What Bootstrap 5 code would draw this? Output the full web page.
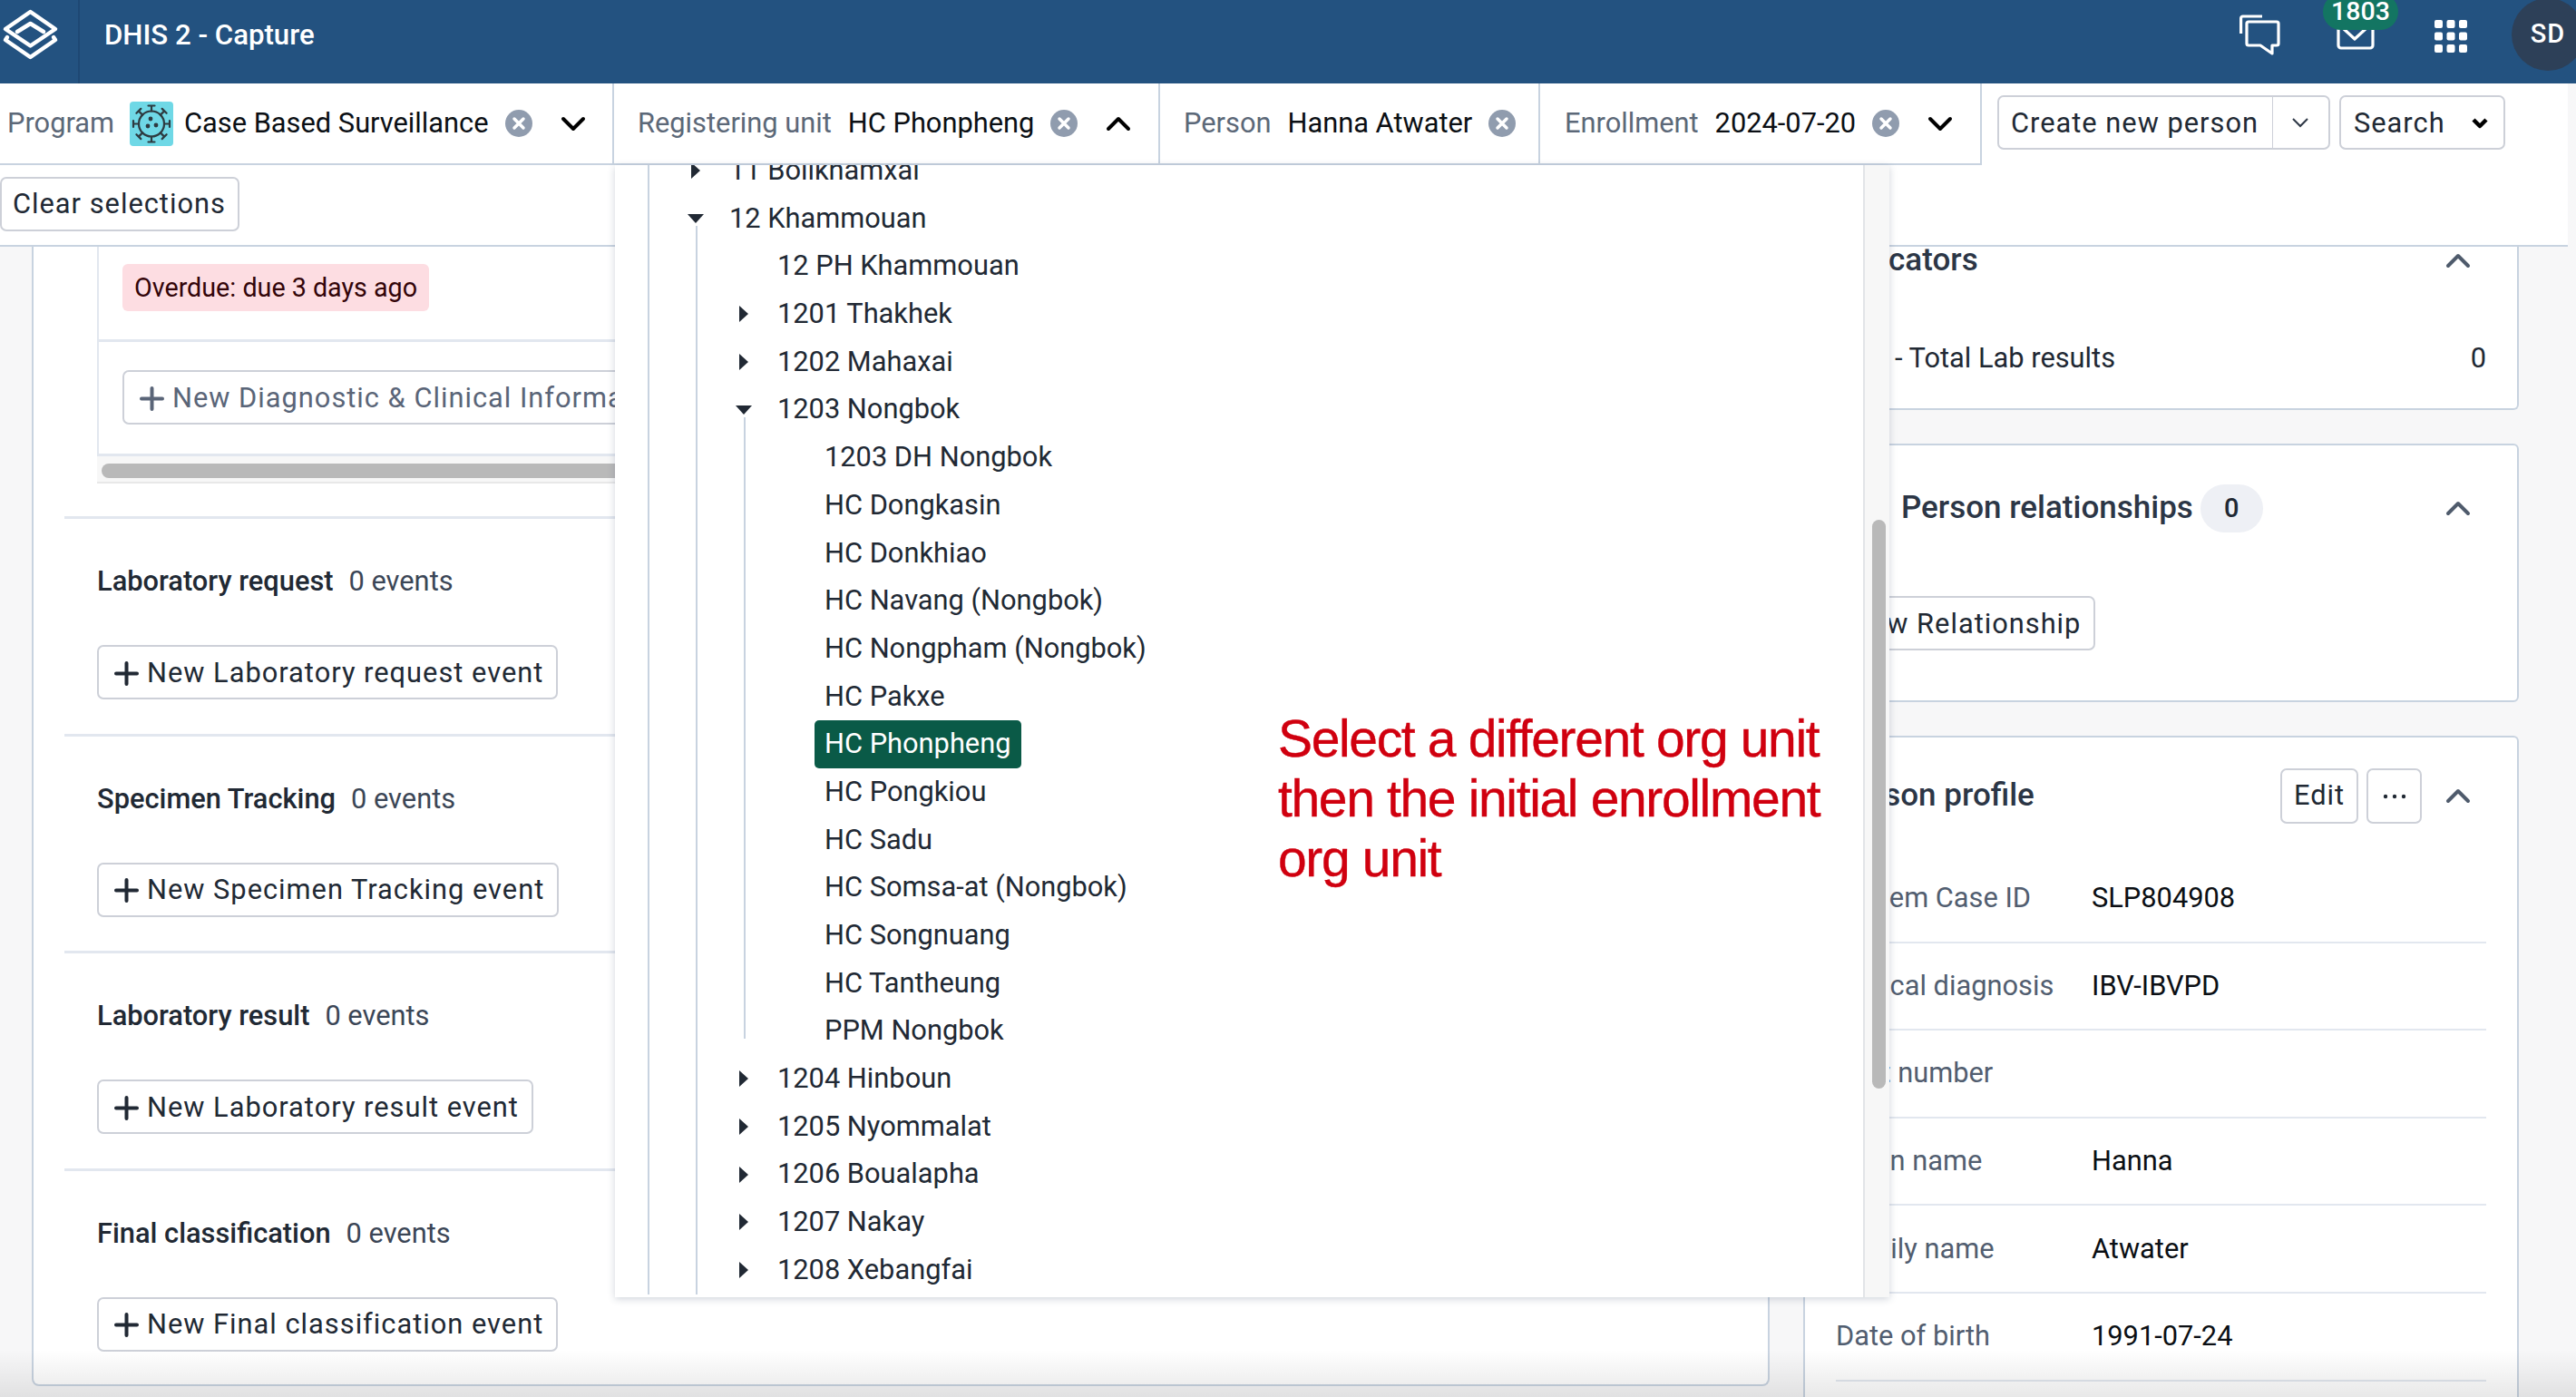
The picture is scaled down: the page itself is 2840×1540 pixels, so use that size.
<!DOCTYPE html>
<html lang="en">
<head>
    <meta charset="UTF-8">
    <meta name="viewport" content="width=device-width, initial-scale=1.0">
    <title>DHIS 2 - Capture</title>
    <link href="https://cdn.jsdelivr.net/npm/bootstrap@5.3.0/dist/css/bootstrap.min.css" rel="stylesheet">
    <style>
        html { height: 1540px; overflow: hidden; }
        body { width: 2840px; height: 1540px; overflow: hidden; background: #f7f7f8; font-family: Roboto, "Liberation Sans", sans-serif; font-size: 30.8px; color: #212934; position: relative; }

        /* header */
        .top-head { height: 92px; background: #235280; color: #fff; flex-wrap: nowrap; align-items: flex-start; }
        .logo-cell { width: 88px; height: 92px; border-right: 2px solid #1e4873; }
        .app-title { margin: 20px 0 0 27px; font-size: 31.2px; font-weight: 500; line-height: 37px; }
        .head-icons { margin-right: -9px; }
        .chat-icon { margin-top: 16px; }
        .mail-wrap { position: relative; margin-left: 62px; margin-right: 66px; line-height: 0; }
        .mail-icon { margin-top: 16px; }
        .mail-count { position: absolute; top: -7px; left: -15px; width: 83px; height: 40px; padding: 0; background: #137562; font-size: 28.5px; font-weight: 500; line-height: 40px; border-radius: 20px; }
        .apps-icon { margin: 22px 49px 0 0; }
        .avatar-dot { width: 80px; height: 80px; margin-top: -2px; border-radius: 50%; background: #2d4058; font-size: 29px; font-weight: 500; letter-spacing: 1px; }

        /* selection bar */
        .ctx-bar { height: 180px; width: 2831px; background: #fff; border-bottom: 2px solid #c8d3e0; }
        .ctx-row { height: 90px; }
        .ctx-cells { border-bottom: 2px solid #c8d3e0; border-right: 2px solid #c8d3e0; height: 90px; width: 2185px; }
        .ctx-cell { height: 88px; white-space: nowrap; border-right: 2px solid #c8d3e0; }
        .cell-program { width: 677px; padding-left: 8px; }
        .cell-program .ctx-label { margin-right: 17px; }
        .cell-unit { width: 602px; padding-left: 26px; }
        .cell-person { width: 419px; padding-left: 26px; }
        .cell-enroll { width: 485px; padding-left: 27px; border-right: 0; }
        .ctx-label { color: #5c6878; margin-right: 18px; }
        .ctx-value { color: #0b0f14; }
        .prog-icon { width: 48px; height: 49px; margin-right: 12px; flex: none; }
        .clear-x { margin-left: 18px; flex: none; }
        .ctx-chev { margin-left: 31px; flex: none; }
        .ctx-actions { margin-left: 17px; padding-top: 13px; gap: 10px; }
        .clear-row { height: 60px; margin-top: 13px; }

        .cap-btn { height: 60px; padding: 0 20px; background: #fff; border: 2px solid #cdd0d8; border-radius: 7px; color: #212934; font-size: 30.8px; letter-spacing: 1px; line-height: 1; display: inline-flex; align-items: center; white-space: nowrap; }
        .cap-btn:hover { background: #fff; }
        .clear-btn { padding: 0 12px; width: 264px; }
        .plus-btn { padding: 2px 14px 0 17px; gap: 9px; }
        .plus-btn.is-off { color: #5a6578; }
        .create-main { width: 305px; padding: 2px 0 0 13px; border-radius: 7px 0 0 7px !important; }
        .create-caret { width: 63px; padding: 0 0 0 20px; border-left: 0; border-radius: 0 7px 7px 0 !important; }
        .search-btn { width: 183px; padding: 2px 16px 0 14px; justify-content: space-between; }

        /* work area */
        .work-area { height: 1268px; overflow: hidden; gap: 37px; padding-left: 35px; }
        .stage-panel { width: 1916px; height: 1256px; flex: none; padding: 0 34px; background: #fff; border: 2px solid #c8d3e0; border-top: 0; border-radius: 0 0 8px 8px; }
        .stage-box { height: 231px; margin-left: 36px; border-left: 2px solid #e2e7ef; border-bottom: 3px solid #e2e7ef; }
        .stage-top { height: 105px; padding: 19px 0 0 26px; border-bottom: 3px solid #e2e7ef; }
        .overdue-tag { display: inline-block; height: 52px; padding: 0 13px; line-height: 52px; background: #fddde2; color: #330509; border-radius: 6px; font-size: 28.7px; }
        .stage-bottom { padding: 31px 0 0 26px; }
        .hscroll-track { height: 30px; margin: 0 0 36px 36px; padding: 8px 5px 0; background: #f7f7f7; border-bottom: 2px solid #e8e8e8; }
        .hscroll-thumb { height: 16px; background: #b9b9b9; border-radius: 8px; }
        .event-stage { height: 239.500px; padding: 49px 0 0 36px; border-top: 3px solid #e2e7ef; }
        .stage-name { font-weight: 500; }
        .stage-count { margin-left: 17px; color: #3b4656; }
        .event-head { height: 40px; line-height: 40px; margin-bottom: 50px; white-space: nowrap; }

        .side-col { width: 789px; flex: none; gap: 37px; }
        .side-card { flex: none; background: #fff; border: 2px solid #c8d3e0; border-radius: 6px; padding: 0 34px; color: #212934; }
        .first-card { height: 180px; border-top: 0; border-radius: 0 0 6px 6px; }
        .rel-card { height: 285px; padding-top: 43px; }
        .profile-card { height: 800px; padding-top: 34px; border-bottom: 0; border-radius: 6px 6px 0 0; }
        .side-title { font-size: 35px; font-weight: 500; color: #2c3646; white-space: nowrap; }
        .rel-title { margin-left: 72px; }
        .title-row { padding-right: 17px; }
        .title-slim { height: 30px; }
        .title-mid { height: 53px; }
        .title-tall { height: 61px; }
        .lab-line { margin-top: 70px; }
        .lab-name { margin-left: 65px; }
        .rel-count { margin-left: 8px; width: 69px; height: 53px; padding: 0; background: #eef0f5; color: #212934; border-radius: 27px; font-size: 29px; font-weight: 500; line-height: 53px; }
        .rel-btn { margin-top: 70px; padding-left: 14px; }
        .head-chev { flex: none; }
        .tiny-btn { height: 61px; padding: 0; justify-content: center; }
        .edit-btn { width: 86px; }
        .more-btn { width: 61px; margin: 0 26px 0 9px; }
        .prof-rows { margin-top: 35px; }
        .prof-row { height: 96.600px; border-bottom: 2px solid #e2e7ef; }
        .prof-label { width: 282px; color: #525e70; flex: none; white-space: nowrap; }
        .prof-value { color: #0b0f14; }

        /* org unit popup */
        .org-popup { position: absolute; top: 182px; left: 678px; width: 1405px; height: 1248px; background: #fff; overflow: hidden; box-shadow: 0 2px 8px rgba(40, 60, 90, .22); z-index: 10; }
        .org-tree { margin: -20px 0 0 36px; padding: 0 0 0 25px; list-style: none; border-left: 2px solid #c8d3e0; }
        .org-kids { position: relative; list-style: none; margin: 0 0 0 26px; padding: 0 0 0 26px; }
        .org-kids::before { content: ""; position: absolute; left: 0; width: 2px; background: #c8d3e0; }
        .org-open { padding-left: 27px; }
        .org-open::before { top: -18px; bottom: 0; }
        .org-last { padding-left: 26px; }
        .org-last::before { top: -18px; bottom: 18px; }
        .org-item { height: 52.700px; display: flex; align-items: center; white-space: nowrap; color: #212934; }
        .org-arrow { width: 52px; flex: none; display: flex; justify-content: center; }
        .org-text { display: block; height: 52.700px; line-height: 52.700px; padding: 0 11px; }
        .org-text.picked { background: #0a5a47; color: #fff; border-radius: 5px; }
        .org-scroll { position: absolute; top: 0; right: 0; width: 29px; height: 100%; background: #f7f7f7; border-left: 2px solid #e2e4e8; }
        .org-thumb { position: absolute; top: 391px; left: 8px; width: 15px; height: 627px; background: #b9b9b9; border-radius: 8px; }
        .red-note { position: absolute; top: 599px; left: 731px; font-family: "Liberation Sans", Arial, sans-serif; font-size: 57px; letter-spacing: -1.350px; line-height: 66px; color: #d0000f; -webkit-text-stroke: .4px #d0000f; white-space: nowrap; }

        .bottom-fade { position: absolute; left: 0; right: 0; bottom: 0; height: 52px; background: linear-gradient(rgba(0, 0, 0, 0), rgba(0, 0, 0, .09)); pointer-events: none; z-index: 20; }
    </style>
</head>
<body>

<!-- Barra superior -->
<nav class="navbar top-head p-0 d-flex justify-content-between">
    <div class="d-flex align-items-start">
        <div class="logo-cell d-flex align-items-start">
            <svg width="68" height="70" viewBox="0 0 68 70" fill="none" stroke="#fff" stroke-width="4.500" stroke-linejoin="round" stroke-linecap="round">
                <path d="M33.500 13 L61 32 L33.500 50.500 L6 32 Z"/>
                <path d="M19 35 L33.500 26 L48 35"/>
                <path d="M8 41 L6 44 L33.500 63 L61 44 L59 41"/>
            </svg>
        </div>
        <span class="app-title">DHIS 2 - Capture</span>
    </div>
    <div class="head-icons d-flex align-items-start">
        <svg class="chat-icon" width="45" height="46" viewBox="0 0 45 46" fill="none" stroke="#fff" stroke-width="3.200" stroke-linejoin="round">
            <path d="M1.600 21 V4 a2 2 0 0 1 2-2 H25"/>
            <path d="M8 10 a2 2 0 0 1 2-2 H41 a2 2 0 0 1 2 2 V32 a2 2 0 0 1-2 2 H36 V43 L23 34 H10 a2 2 0 0 1-2-2 Z"/>
        </svg>
        <div class="mail-wrap">
            <svg class="mail-icon" width="42" height="40" viewBox="0 0 42 40" fill="none" stroke="#fff" stroke-width="3.200" stroke-linejoin="round">
                <rect x="2" y="2" width="38" height="35" rx="3"/>
                <path d="M7 15 L20 27 L33 15"/>
            </svg>
            <span class="badge mail-count">1803</span>
        </div>
        <svg class="apps-icon" width="36" height="36" viewBox="0 0 36 36" fill="#fff">
            <rect x="0" y="0" width="9" height="9" rx="2"/><rect x="13.500" y="0" width="9" height="9" rx="2"/><rect x="27" y="0" width="9" height="9" rx="2"/>
            <rect x="0" y="13.500" width="9" height="9" rx="2"/><rect x="13.500" y="13.500" width="9" height="9" rx="2"/><rect x="27" y="13.500" width="9" height="9" rx="2"/>
            <rect x="0" y="27" width="9" height="9" rx="2"/><rect x="13.500" y="27" width="9" height="9" rx="2"/><rect x="27" y="27" width="9" height="9" rx="2"/>
        </svg>
        <div class="avatar-dot d-flex align-items-center justify-content-center">SD</div>
    </div>
</nav>

<!-- Seleccion de contexto -->
<section class="ctx-bar">
    <div class="ctx-row d-flex">
        <div class="ctx-cells d-flex">
            <div class="ctx-cell cell-program d-flex align-items-center">
                <span class="ctx-label">Program</span>
                <svg class="prog-icon" viewBox="0 0 48 49">
                    <rect width="48" height="49" rx="4" fill="#6fd8e6"/>
                    <g fill="none" stroke="#2d3a40" stroke-width="2.200" stroke-linecap="round">
                        <circle cx="24" cy="24.500" r="14"/>
                        <path d="M24 10.500 V4.500 M20.500 4.500 H27.500"/>
                        <path d="M24 10.500 V4.500 M20.500 4.500 H27.500" transform="rotate(45 24 24.500)"/>
                        <path d="M24 10.500 V4.500 M20.500 4.500 H27.500" transform="rotate(90 24 24.500)"/>
                        <path d="M24 10.500 V4.500 M20.500 4.500 H27.500" transform="rotate(135 24 24.500)"/>
                        <path d="M24 10.500 V4.500 M20.500 4.500 H27.500" transform="rotate(180 24 24.500)"/>
                        <path d="M24 10.500 V4.500 M20.500 4.500 H27.500" transform="rotate(225 24 24.500)"/>
                        <path d="M24 10.500 V4.500 M20.500 4.500 H27.500" transform="rotate(270 24 24.500)"/>
                        <path d="M24 10.500 V4.500 M20.500 4.500 H27.500" transform="rotate(315 24 24.500)"/>
                    </g>
                    <circle cx="23" cy="19" r="2.400" fill="#2d3a40"/><circle cx="20" cy="27" r="2.400" fill="#2d3a40"/><circle cx="29" cy="26" r="2.400" fill="#2d3a40"/>
                </svg>
                <span class="ctx-value">Case Based Surveillance</span>
                <svg class="clear-x" width="30" height="30" viewBox="0 0 30 30"><circle cx="15" cy="15" r="15" fill="#909cae"/><path d="M10 10 L20 20 M20 10 L10 20" stroke="#fff" stroke-width="3.500" stroke-linecap="round"/></svg>
                <svg class="ctx-chev" width="28" height="17" viewBox="0 0 28 17" fill="none" stroke="#000" stroke-width="4" stroke-linecap="round" stroke-linejoin="round"><path d="M3 3 L14 14 L25 3"/></svg>
            </div>
            <div class="ctx-cell cell-unit d-flex align-items-center">
                <span class="ctx-label">Registering unit</span>
                <span class="ctx-value">HC Phonpheng</span>
                <svg class="clear-x" width="30" height="30" viewBox="0 0 30 30"><circle cx="15" cy="15" r="15" fill="#909cae"/><path d="M10 10 L20 20 M20 10 L10 20" stroke="#fff" stroke-width="3.500" stroke-linecap="round"/></svg>
                <svg class="ctx-chev" width="28" height="17" viewBox="0 0 28 17" fill="none" stroke="#000" stroke-width="4" stroke-linecap="round" stroke-linejoin="round"><path d="M3 14 L14 3 L25 14"/></svg>
            </div>
            <div class="ctx-cell cell-person d-flex align-items-center">
                <span class="ctx-label">Person</span>
                <span class="ctx-value">Hanna Atwater</span>
                <svg class="clear-x" width="30" height="30" viewBox="0 0 30 30"><circle cx="15" cy="15" r="15" fill="#909cae"/><path d="M10 10 L20 20 M20 10 L10 20" stroke="#fff" stroke-width="3.500" stroke-linecap="round"/></svg>
            </div>
            <div class="ctx-cell cell-enroll d-flex align-items-center">
                <span class="ctx-label">Enrollment</span>
                <span class="ctx-value">2024-07-20</span>
                <svg class="clear-x" width="30" height="30" viewBox="0 0 30 30"><circle cx="15" cy="15" r="15" fill="#909cae"/><path d="M10 10 L20 20 M20 10 L10 20" stroke="#fff" stroke-width="3.500" stroke-linecap="round"/></svg>
                <svg class="ctx-chev" width="28" height="17" viewBox="0 0 28 17" fill="none" stroke="#000" stroke-width="4" stroke-linecap="round" stroke-linejoin="round"><path d="M3 3 L14 14 L25 3"/></svg>
            </div>
        </div>
        <div class="ctx-actions d-flex align-items-start">
            <div class="btn-group">
                <button type="button" class="btn cap-btn create-main">Create new person</button>
                <button type="button" class="btn cap-btn create-caret">
                    <svg width="20" height="12" viewBox="0 0 20 12" fill="none" stroke="#2f3947" stroke-width="2"><path d="M2 2 L10 10 L18 2"/></svg>
                </button>
            </div>
            <button type="button" class="btn cap-btn search-btn">Search
                <svg width="20" height="14" viewBox="0 0 20 14" fill="none" stroke="#000" stroke-width="4.500" stroke-linejoin="round"><path d="M3 3 L10 10 L17 3"/></svg>
            </button>
        </div>
    </div>
    <div class="clear-row"><button type="button" class="btn cap-btn clear-btn">Clear selections</button></div>
</section>

<!-- Contenido -->
<main class="work-area d-flex">
    <div class="stage-panel">
        <div class="stage-box">
            <div class="stage-top"><span class="overdue-tag">Overdue: due 3 days ago</span></div>
            <div class="stage-bottom">
                <button type="button" class="btn cap-btn plus-btn is-off">
                    <svg width="27" height="27" viewBox="0 0 27 27" stroke="#5a6578" stroke-width="4" stroke-linecap="round"><path d="M13.500 2 V25 M2 13.500 H25"/></svg>
                    New Diagnostic &amp; Clinical Information event
                </button>
            </div>
        </div>
        <div class="hscroll-track"><div class="hscroll-thumb"></div></div>

        <div class="event-stage">
            <div class="event-head"><span class="stage-name">Laboratory request</span><span class="stage-count">0 events</span></div>
            <button type="button" class="btn cap-btn plus-btn">
                <svg width="27" height="27" viewBox="0 0 27 27" stroke="#212934" stroke-width="4" stroke-linecap="round"><path d="M13.500 2 V25 M2 13.500 H25"/></svg>
                New Laboratory request event
            </button>
        </div>
        <div class="event-stage">
            <div class="event-head"><span class="stage-name">Specimen Tracking</span><span class="stage-count">0 events</span></div>
            <button type="button" class="btn cap-btn plus-btn">
                <svg width="27" height="27" viewBox="0 0 27 27" stroke="#212934" stroke-width="4" stroke-linecap="round"><path d="M13.500 2 V25 M2 13.500 H25"/></svg>
                New Specimen Tracking event
            </button>
        </div>
        <div class="event-stage">
            <div class="event-head"><span class="stage-name">Laboratory result</span><span class="stage-count">0 events</span></div>
            <button type="button" class="btn cap-btn plus-btn">
                <svg width="27" height="27" viewBox="0 0 27 27" stroke="#212934" stroke-width="4" stroke-linecap="round"><path d="M13.500 2 V25 M2 13.500 H25"/></svg>
                New Laboratory result event
            </button>
        </div>
        <div class="event-stage">
            <div class="event-head"><span class="stage-name">Final classification</span><span class="stage-count">0 events</span></div>
            <button type="button" class="btn cap-btn plus-btn">
                <svg width="27" height="27" viewBox="0 0 27 27" stroke="#212934" stroke-width="4" stroke-linecap="round"><path d="M13.500 2 V25 M2 13.500 H25"/></svg>
                New Final classification event
            </button>
        </div>
    </div>

    <div class="side-col d-flex flex-column">
        <div class="side-card first-card">
            <div class="title-row title-slim d-flex align-items-center justify-content-between">
                <span class="side-title">Indicators</span>
                <svg class="head-chev" width="28" height="17" viewBox="0 0 28 17" fill="none" stroke="#4f5b6c" stroke-width="4" stroke-linecap="round" stroke-linejoin="round"><path d="M3 14 L14 3 L25 14"/></svg>
            </div>
            <div class="lab-line d-flex justify-content-between">
                <span class="lab-name">- Total Lab results</span><span>0</span>
            </div>
        </div>

        <div class="side-card rel-card">
            <div class="title-row title-mid d-flex align-items-center">
                <span class="side-title rel-title">Person relationships</span>
                <span class="badge rel-count">0</span>
                <svg class="head-chev ms-auto" width="28" height="17" viewBox="0 0 28 17" fill="none" stroke="#4f5b6c" stroke-width="4" stroke-linecap="round" stroke-linejoin="round"><path d="M3 14 L14 3 L25 14"/></svg>
            </div>
            <button type="button" class="btn cap-btn plus-btn rel-btn">New Relationship</button>
        </div>

        <div class="side-card profile-card">
            <div class="title-row title-tall d-flex align-items-center">
                <span class="side-title">Person profile</span>
                <button type="button" class="btn cap-btn tiny-btn edit-btn ms-auto">Edit</button>
                <button type="button" class="btn cap-btn tiny-btn more-btn">
                    <svg width="26" height="6" viewBox="0 0 26 6" fill="#212934"><circle cx="3" cy="3" r="2.200"/><circle cx="13" cy="3" r="2.200"/><circle cx="23" cy="3" r="2.200"/></svg>
                </button>
                <svg class="head-chev" width="28" height="17" viewBox="0 0 28 17" fill="none" stroke="#4f5b6c" stroke-width="4" stroke-linecap="round" stroke-linejoin="round"><path d="M3 14 L14 3 L25 14"/></svg>
            </div>
            <div class="prof-rows">
                <div class="prof-row d-flex align-items-center"><span class="prof-label">System Case ID</span><span class="prof-value">SLP804908</span></div>
                <div class="prof-row d-flex align-items-center"><span class="prof-label">Clinical diagnosis</span><span class="prof-value">IBV-IBVPD</span></div>
                <div class="prof-row d-flex align-items-center"><span class="prof-label">Visit number</span><span class="prof-value"></span></div>
                <div class="prof-row d-flex align-items-center"><span class="prof-label">Given name</span><span class="prof-value">Hanna</span></div>
                <div class="prof-row d-flex align-items-center"><span class="prof-label">Family name</span><span class="prof-value">Atwater</span></div>
                <div class="prof-row d-flex align-items-center"><span class="prof-label">Date of birth</span><span class="prof-value">1991-07-24</span></div>
            </div>
        </div>
    </div>
</main>

<!-- Desplegable de unidades -->
<div class="org-popup">
    <ul class="org-tree">
        <li class="org-item"><span class="org-arrow"><svg width="10" height="18" viewBox="0 0 10 18" fill="#212934"><path d="M0 0 L10 9 L0 18 Z"/></svg></span><span class="org-text">11 Bolikhamxai</span></li>
        <li>
            <div class="org-item"><span class="org-arrow"><svg width="18" height="10" viewBox="0 0 18 10" fill="#212934"><path d="M0 0 H18 L9 10 Z"/></svg></span><span class="org-text">12 Khammouan</span></div>
            <ul class="org-kids org-open">
                <li class="org-item"><span class="org-arrow"></span><span class="org-text">12 PH Khammouan</span></li>
                <li class="org-item"><span class="org-arrow"><svg width="10" height="18" viewBox="0 0 10 18" fill="#212934"><path d="M0 0 L10 9 L0 18 Z"/></svg></span><span class="org-text">1201 Thakhek</span></li>
                <li class="org-item"><span class="org-arrow"><svg width="10" height="18" viewBox="0 0 10 18" fill="#212934"><path d="M0 0 L10 9 L0 18 Z"/></svg></span><span class="org-text">1202 Mahaxai</span></li>
                <li>
                    <div class="org-item"><span class="org-arrow"><svg width="18" height="10" viewBox="0 0 18 10" fill="#212934"><path d="M0 0 H18 L9 10 Z"/></svg></span><span class="org-text">1203 Nongbok</span></div>
                    <ul class="org-kids org-last">
                        <li class="org-item"><span class="org-arrow"></span><span class="org-text">1203 DH Nongbok</span></li>
                        <li class="org-item"><span class="org-arrow"></span><span class="org-text">HC Dongkasin</span></li>
                        <li class="org-item"><span class="org-arrow"></span><span class="org-text">HC Donkhiao</span></li>
                        <li class="org-item"><span class="org-arrow"></span><span class="org-text">HC Navang (Nongbok)</span></li>
                        <li class="org-item"><span class="org-arrow"></span><span class="org-text">HC Nongpham (Nongbok)</span></li>
                        <li class="org-item"><span class="org-arrow"></span><span class="org-text">HC Pakxe</span></li>
                        <li class="org-item"><span class="org-arrow"></span><span class="org-text picked">HC Phonpheng</span></li>
                        <li class="org-item"><span class="org-arrow"></span><span class="org-text">HC Pongkiou</span></li>
                        <li class="org-item"><span class="org-arrow"></span><span class="org-text">HC Sadu</span></li>
                        <li class="org-item"><span class="org-arrow"></span><span class="org-text">HC Somsa-at (Nongbok)</span></li>
                        <li class="org-item"><span class="org-arrow"></span><span class="org-text">HC Songnuang</span></li>
                        <li class="org-item"><span class="org-arrow"></span><span class="org-text">HC Tantheung</span></li>
                        <li class="org-item"><span class="org-arrow"></span><span class="org-text">PPM Nongbok</span></li>
                    </ul>
                </li>
                <li class="org-item"><span class="org-arrow"><svg width="10" height="18" viewBox="0 0 10 18" fill="#212934"><path d="M0 0 L10 9 L0 18 Z"/></svg></span><span class="org-text">1204 Hinboun</span></li>
                <li class="org-item"><span class="org-arrow"><svg width="10" height="18" viewBox="0 0 10 18" fill="#212934"><path d="M0 0 L10 9 L0 18 Z"/></svg></span><span class="org-text">1205 Nyommalat</span></li>
                <li class="org-item"><span class="org-arrow"><svg width="10" height="18" viewBox="0 0 10 18" fill="#212934"><path d="M0 0 L10 9 L0 18 Z"/></svg></span><span class="org-text">1206 Boualapha</span></li>
                <li class="org-item"><span class="org-arrow"><svg width="10" height="18" viewBox="0 0 10 18" fill="#212934"><path d="M0 0 L10 9 L0 18 Z"/></svg></span><span class="org-text">1207 Nakay</span></li>
                <li class="org-item"><span class="org-arrow"><svg width="10" height="18" viewBox="0 0 10 18" fill="#212934"><path d="M0 0 L10 9 L0 18 Z"/></svg></span><span class="org-text">1208 Xebangfai</span></li>
            </ul>
        </li>
    </ul>
    <div class="red-note">Select a different org unit<br>then the initial enrollment<br>org unit</div>
    <div class="org-scroll"><div class="org-thumb"></div></div>
</div>

<div class="bottom-fade"></div>

<script src="https://cdn.jsdelivr.net/npm/bootstrap@5.3.0/dist/js/bootstrap.bundle.min.js"></script>
</body>
</html>
